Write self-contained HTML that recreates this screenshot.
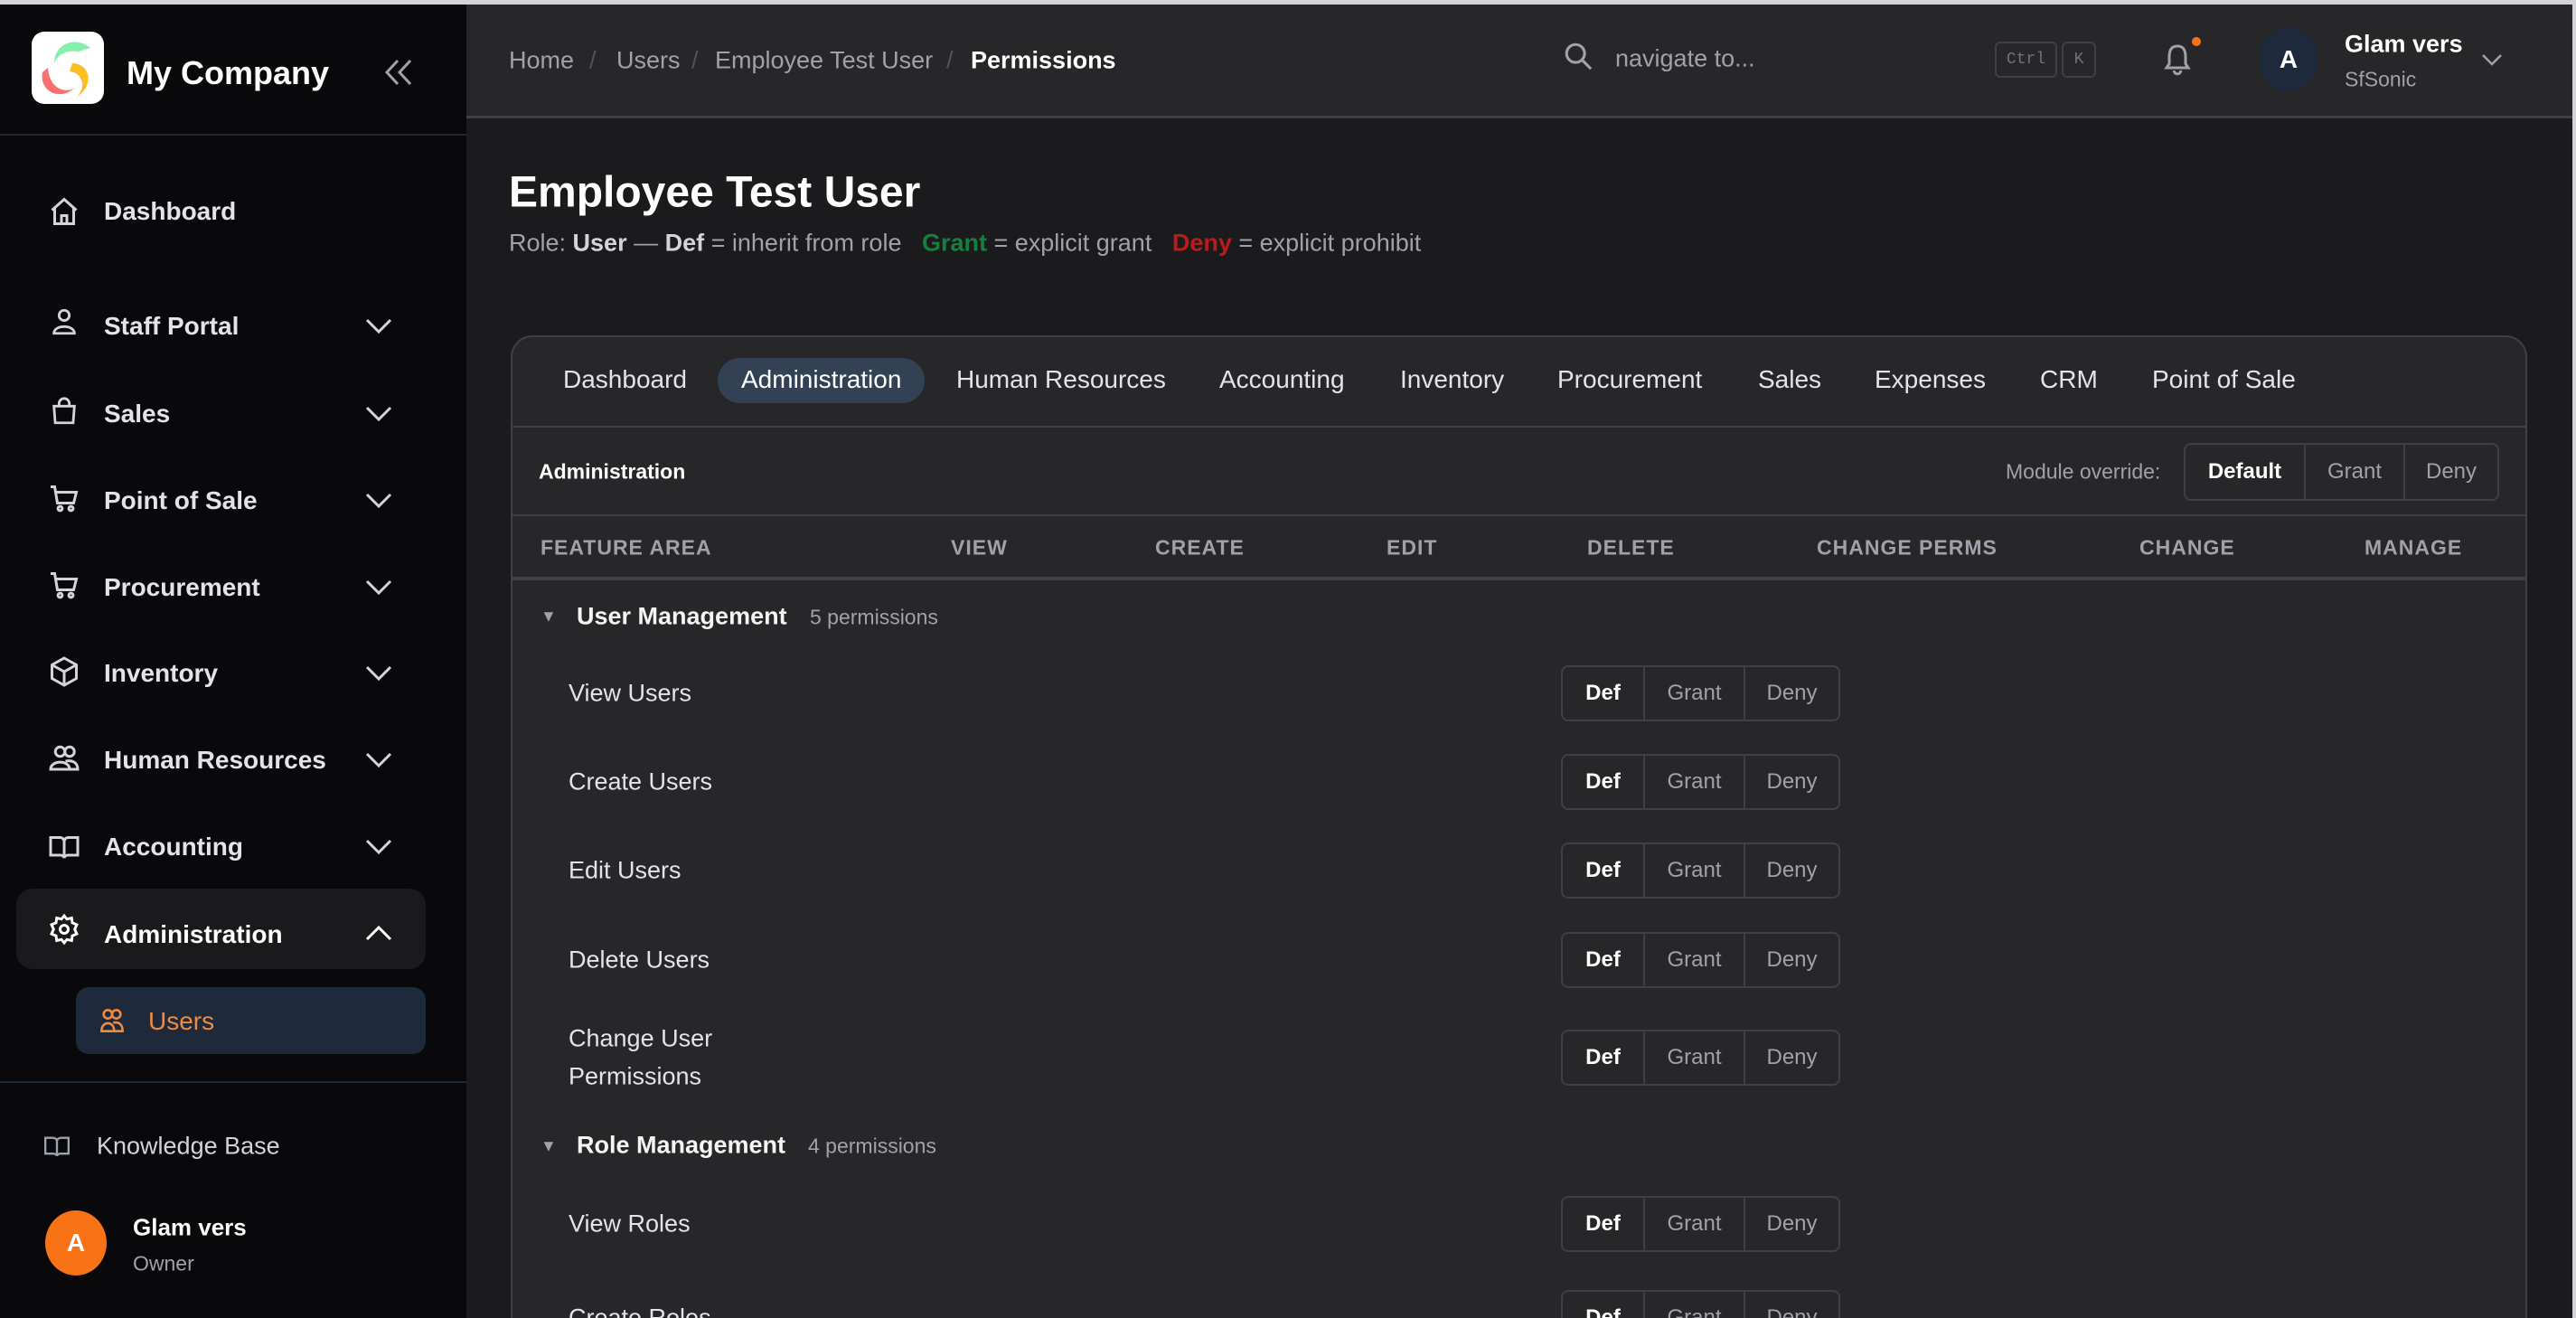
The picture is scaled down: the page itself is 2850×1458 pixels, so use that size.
<!DOCTYPE html>
<html><head><meta charset="utf-8"><style>
*{box-sizing:border-box;margin:0;padding:0}
html,body{width:2850px;height:1458px;overflow:hidden}
body{background:#1b1b1d;font-family:"Liberation Sans",sans-serif;color:#e4e4e7}
#root{position:relative;width:2850px;height:1458px;overflow:hidden}
.a{position:absolute;white-space:nowrap}
#side{position:absolute;left:0;top:0;width:516px;height:1458px;background:#09090b;border-top:5px solid #d4d4d8}
#hdr{position:absolute;left:516px;top:0;width:2334px;height:131px;background:#27272a;border-top:5px solid #d4d4d8;border-bottom:3px solid #3f3f46}
.nav{font-size:28px;color:#e4e4e7;font-weight:bold;transform:translateY(-50%)}
.ic{position:absolute;transform:translate(-50%,-50%)}
.chev{position:absolute;left:404px;transform:translateY(-50%)}
.bc{font-size:27px;color:#a1a1aa;transform:translateY(-50%)}
.card{position:absolute;left:565px;top:371px;width:2231px;height:1200px;background:#27272a;border:2px solid #3f3f46;border-radius:24px}
.tab{font-size:28px;color:#e4e4e7;transform:translateY(-50%)}
.th{font-size:23px;color:#a1a1aa;font-weight:bold;letter-spacing:1px;transform:translateY(-50%)}
.row{font-size:27px;color:#e4e4e7;transform:translateY(-50%)}
.grp{position:absolute;display:flex;border:2px solid #3f3f46;border-radius:8px;height:62px;transform:translateY(-50%)}
.grp div{display:flex;align-items:center;justify-content:center;font-size:24px;color:#a1a1aa;height:100%}
.grp div+div{border-left:2px solid #3f3f46}
.grp .on{color:#fff;font-weight:bold}
.gh{font-size:27px;font-weight:bold;color:#f4f4f5;transform:translateY(-50%)}
.gc{font-size:23px;color:#a1a1aa;transform:translateY(-50%)}
</style></head><body><div id="root">
<div id="side">
  <svg class="a" style="left:35px;top:30px" width="80" height="80" viewBox="0 0 80 80"><rect width="80" height="80" rx="14" fill="#fff"/>
  <path d="M65 18 C50 5 25 12 25 35 C28 26 38 20 52 22 Z" fill="#86efac"/>
  <path d="M12 45 C8 65 30 78 48 62 C40 68 20 66 18 40 Z" fill="#f87171"/>
  <path d="M45 35 C65 35 70 60 50 72 C62 60 55 45 42 44 Z" fill="#fbbf24"/></svg>
  <div class="a" style="left:140px;top:55px;font-size:36px;font-weight:bold;color:#fff">My Company</div>
  <svg class="a" style="left:425px;top:60px" width="32" height="30" viewBox="0 0 32 30" fill="none" stroke="#a1a1aa" stroke-width="3"><path d="M15 2 L3 15 L15 28 M29 2 L17 15 L29 28"/></svg>
  <div class="a" style="left:0;top:143px;width:516px;height:2px;background:#1e293b"></div>

  <svg class="ic" style="left:71px;top:229px" width="36" height="36" viewBox="0 0 24 24" fill="none" stroke="#d4d4d8" stroke-width="2"><path d="M3 11 L12 3 L21 11 M5 9 V21 H19 V9 M10 21 V15 H14 V21"/></svg>
  <div class="a nav" style="left:115px;top:229px">Dashboard</div>

  <svg class="ic" style="left:71px;top:351px" width="34" height="36" viewBox="0 0 24 24" fill="none" stroke="#d4d4d8" stroke-width="2"><circle cx="12" cy="7" r="4"/><path d="M4 21 C4 14 20 14 20 21 Z"/></svg>
  <div class="a nav" style="left:115px;top:356px">Staff Portal</div>
  <svg class="ic" style="left:71px;top:450px" width="34" height="36" viewBox="0 0 24 24" fill="none" stroke="#d4d4d8" stroke-width="2"><path d="M4 8 H20 L19 21 H5 Z M8 8 V6 A4 4 0 0 1 16 6 V8"/></svg>
  <div class="a nav" style="left:115px;top:453px">Sales</div>
  <svg class="ic" style="left:71px;top:547px" width="36" height="36" viewBox="0 0 24 24" fill="none" stroke="#d4d4d8" stroke-width="2"><path d="M2 3 H5 L7 15 H19 L21 7 H6"/><circle cx="9" cy="19" r="1.6"/><circle cx="17" cy="19" r="1.6"/></svg>
  <div class="a nav" style="left:115px;top:549px">Point of Sale</div>
  <svg class="ic" style="left:71px;top:643px" width="36" height="36" viewBox="0 0 24 24" fill="none" stroke="#d4d4d8" stroke-width="2"><path d="M2 3 H5 L7 15 H19 L21 7 H6"/><circle cx="9" cy="19" r="1.6"/><circle cx="17" cy="19" r="1.6"/></svg>
  <div class="a nav" style="left:115px;top:645px">Procurement</div>
  <svg class="ic" style="left:71px;top:738px" width="36" height="36" viewBox="0 0 24 24" fill="none" stroke="#d4d4d8" stroke-width="2"><path d="M12 2 L21 7 V17 L12 22 L3 17 V7 Z M3 7 L12 12 L21 7 M12 12 V22"/></svg>
  <div class="a nav" style="left:115px;top:740px">Inventory</div>
  <svg class="ic" style="left:71px;top:834px" width="38" height="36" viewBox="0 0 24 24" fill="none" stroke="#d4d4d8" stroke-width="2"><circle cx="9" cy="7" r="3.5"/><circle cx="16" cy="7" r="3.5"/><path d="M2 20 C2 13 16 13 16 20 Z M13 14 C18 13 22 15 22 20 H16"/></svg>
  <div class="a nav" style="left:115px;top:836px">Human Resources</div>
  <svg class="ic" style="left:71px;top:932px" width="38" height="36" viewBox="0 0 24 24" fill="none" stroke="#d4d4d8" stroke-width="2"><path d="M2 5 H9 A3 3 0 0 1 12 8 V20 A3 3 0 0 0 9 18 H2 Z M22 5 H15 A3 3 0 0 0 12 8 V20 A3 3 0 0 1 15 18 H22 Z"/></svg>
  <div class="a nav" style="left:115px;top:932px">Accounting</div>

  <svg class="chev" style="top:356px" width="30" height="18" viewBox="0 0 30 18" fill="none" stroke="#d4d4d8" stroke-width="3"><path d="M2 2 L15 15 L28 2"/></svg>
  <svg class="chev" style="top:453px" width="30" height="18" viewBox="0 0 30 18" fill="none" stroke="#d4d4d8" stroke-width="3"><path d="M2 2 L15 15 L28 2"/></svg>
  <svg class="chev" style="top:549px" width="30" height="18" viewBox="0 0 30 18" fill="none" stroke="#d4d4d8" stroke-width="3"><path d="M2 2 L15 15 L28 2"/></svg>
  <svg class="chev" style="top:645px" width="30" height="18" viewBox="0 0 30 18" fill="none" stroke="#d4d4d8" stroke-width="3"><path d="M2 2 L15 15 L28 2"/></svg>
  <svg class="chev" style="top:740px" width="30" height="18" viewBox="0 0 30 18" fill="none" stroke="#d4d4d8" stroke-width="3"><path d="M2 2 L15 15 L28 2"/></svg>
  <svg class="chev" style="top:836px" width="30" height="18" viewBox="0 0 30 18" fill="none" stroke="#d4d4d8" stroke-width="3"><path d="M2 2 L15 15 L28 2"/></svg>
  <svg class="chev" style="top:932px" width="30" height="18" viewBox="0 0 30 18" fill="none" stroke="#d4d4d8" stroke-width="3"><path d="M2 2 L15 15 L28 2"/></svg>

  <div class="a" style="left:18px;top:978px;width:453px;height:89px;background:#1a1a1c;border-radius:18px"></div>
  <svg class="ic" style="left:71px;top:1023px" width="36" height="36" viewBox="0 0 24 24" fill="none" stroke="#fff" stroke-width="2"><circle cx="12" cy="12" r="3"/><path d="M12 2 L14 4.5 L17.5 3.7 L18 7.2 L21.3 8.6 L19.8 12 L21.3 15.4 L18 16.8 L17.5 20.3 L14 19.5 L12 22 L10 19.5 L6.5 20.3 L6 16.8 L2.7 15.4 L4.2 12 L2.7 8.6 L6 7.2 L6.5 3.7 L10 4.5 Z"/></svg>
  <div class="a nav" style="left:115px;top:1029px;color:#fff">Administration</div>
  <svg class="chev" style="top:1027px" width="30" height="18" viewBox="0 0 30 18" fill="none" stroke="#fff" stroke-width="3"><path d="M2 16 L15 3 L28 16"/></svg>

  <div class="a" style="left:84px;top:1087px;width:387px;height:74px;background:#1e293b;border-radius:14px"></div>
  <svg class="ic" style="left:124px;top:1124px" width="28" height="28" viewBox="0 0 24 24" fill="none" stroke="#f08a3c" stroke-width="2.2"><circle cx="8" cy="6" r="4"/><circle cx="16" cy="6" r="4"/><path d="M2 22 C2 12 14 12 14 22 Z M14 22 H22 C22 15 18 13 13 14"/></svg>
  <div class="a" style="left:164px;top:1125px;font-size:28px;color:#f08a3c;transform:translateY(-50%)">Users</div>

  <div class="a" style="left:0;top:1191px;width:516px;height:2px;background:#1e293b"></div>
  <svg class="ic" style="left:63px;top:1263px" width="28" height="24" viewBox="0 0 24 20" fill="none" stroke="#9ca3af" stroke-width="2"><path d="M1 2 H8 A4 3 0 0 1 12 5 V19 A4 3 0 0 0 8 17 H1 Z M23 2 H16 A4 3 0 0 0 12 5 V19 A4 3 0 0 1 16 17 H23 Z"/></svg>
  <div class="a" style="left:107px;top:1263px;font-size:27px;color:#d4d4d8;transform:translateY(-50%)">Knowledge Base</div>
  <div class="a" style="left:50px;top:1334px;width:68px;height:72px;border-radius:50%;background:#f97316;color:#fff;font-weight:bold;font-size:28px;display:flex;align-items:center;justify-content:center">A</div>
  <div class="a" style="left:147px;top:1353px;font-size:26px;font-weight:bold;color:#fff;transform:translateY(-50%)">Glam vers</div>
  <div class="a" style="left:147px;top:1393px;font-size:23px;color:#a1a1aa;transform:translateY(-50%)">Owner</div>
</div>

<div id="hdr"></div>
<div class="a bc" style="left:563px;top:67px">Home</div>
<div class="a bc" style="left:652px;top:67px;color:#52525b">/</div>
<div class="a bc" style="left:682px;top:67px">Users</div>
<div class="a bc" style="left:765px;top:67px;color:#52525b">/</div>
<div class="a bc" style="left:791px;top:67px">Employee Test User</div>
<div class="a bc" style="left:1047px;top:67px;color:#52525b">/</div>
<div class="a bc" style="left:1074px;top:67px;color:#fff;font-weight:bold">Permissions</div>

<svg class="ic" style="left:1746px;top:62px" width="34" height="34" viewBox="0 0 24 24" fill="none" stroke="#a1a1aa" stroke-width="2.2"><circle cx="10" cy="10" r="7"/><path d="M15 15 L22 22"/></svg>
<div class="a" style="left:1787px;top:65px;font-size:27px;color:#a1a1aa;transform:translateY(-50%)">navigate to...</div>
<div class="a" style="left:2207px;top:46px;width:69px;height:40px;border:2px solid #3f3f46;border-radius:6px;font-family:'Liberation Mono',monospace;font-size:18px;color:#71717a;display:flex;align-items:center;justify-content:center">Ctrl</div>
<div class="a" style="left:2281px;top:46px;width:38px;height:40px;border:2px solid #3f3f46;border-radius:6px;font-family:'Liberation Mono',monospace;font-size:18px;color:#71717a;display:flex;align-items:center;justify-content:center">K</div>
<svg class="ic" style="left:2409px;top:66px" width="36" height="40" viewBox="0 0 24 26" fill="none" stroke="#a1a1aa" stroke-width="2"><path d="M12 3 C7 3 6 7 6 11 V16 L4 19 H20 L18 16 V11 C18 7 17 3 12 3 Z M9.5 21 A2.5 2.5 0 0 0 14.5 21"/></svg>
<div class="a" style="left:2425px;top:41px;width:10px;height:10px;border-radius:50%;background:#f97316"></div>
<div class="a" style="left:2499px;top:30px;width:66px;height:72px;border-radius:50%;background:#1e293b;color:#fff;font-size:28px;font-weight:bold;display:flex;align-items:center;justify-content:center">A</div>
<div class="a" style="left:2594px;top:49px;font-size:27px;font-weight:bold;color:#fff;transform:translateY(-50%)">Glam vers</div>
<div class="a" style="left:2594px;top:88px;font-size:23px;color:#a1a1aa;transform:translateY(-50%)">SfSonic</div>
<svg class="ic" style="left:2757px;top:66px" width="24" height="14" viewBox="0 0 24 14" fill="none" stroke="#a1a1aa" stroke-width="2.5"><path d="M2 2 L12 12 L22 2"/></svg>

<div class="a" style="left:563px;top:213px;font-size:48px;font-weight:bold;color:#fff;transform:translateY(-50%)">Employee Test User</div>
<div class="a" style="left:563px;top:269px;font-size:27px;color:#a1a1aa;transform:translateY(-50%)">Role: <b style="color:#d4d4d8">User</b> — <b style="color:#d4d4d8">Def</b> = inherit from role &nbsp; <b style="color:#15803d">Grant</b> = explicit grant &nbsp; <b style="color:#b91c1c">Deny</b> = explicit prohibit</div>

<div class="card"></div>
<div class="a" style="left:794px;top:396px;width:229px;height:50px;border-radius:25px;background:#334155"></div>
<div class="a tab" style="left:623px;top:420px">Dashboard</div>
<div class="a tab" style="left:820px;top:420px;color:#fff">Administration</div>
<div class="a tab" style="left:1058px;top:420px">Human Resources</div>
<div class="a tab" style="left:1349px;top:420px">Accounting</div>
<div class="a tab" style="left:1549px;top:420px">Inventory</div>
<div class="a tab" style="left:1723px;top:420px">Procurement</div>
<div class="a tab" style="left:1945px;top:420px">Sales</div>
<div class="a tab" style="left:2074px;top:420px">Expenses</div>
<div class="a tab" style="left:2257px;top:420px">CRM</div>
<div class="a tab" style="left:2381px;top:420px">Point of Sale</div>
<div class="a" style="left:567px;top:471px;width:2227px;height:2px;background:#3f3f46"></div>

<div class="a" style="left:596px;top:522px;font-size:23px;font-weight:bold;color:#fff;transform:translateY(-50%)">Administration</div>
<div class="a" style="left:2219px;top:522px;font-size:23px;color:#a1a1aa;transform:translateY(-50%)">Module override:</div>
<div class="grp" style="left:2416px;top:522px;height:64px">
  <div class="on" style="width:131px">Default</div><div style="width:110px">Grant</div><div style="width:104px">Deny</div>
</div>
<div class="a" style="left:567px;top:569px;width:2227px;height:2px;background:#3f3f46"></div>

<div class="a th" style="left:598px;top:606px">FEATURE AREA</div>
<div class="a th" style="left:1052px;top:606px">VIEW</div>
<div class="a th" style="left:1278px;top:606px">CREATE</div>
<div class="a th" style="left:1534px;top:606px">EDIT</div>
<div class="a th" style="left:1756px;top:606px">DELETE</div>
<div class="a th" style="left:2010px;top:606px">CHANGE PERMS</div>
<div class="a th" style="left:2367px;top:606px">CHANGE</div>
<div class="a th" style="left:2616px;top:606px">MANAGE</div>
<div class="a" style="left:567px;top:638px;width:2227px;height:4px;background:#3f3f46"></div>

<div class="a" style="left:598px;top:682px;font-size:18px;color:#a1a1aa;transform:translateY(-50%)">▼</div>
<div class="a gh" style="left:638px;top:682px">User Management</div>
<div class="a gc" style="left:896px;top:683px">5 permissions</div>

<div class="a row" style="left:629px;top:767px">View Users</div>
<div class="grp" style="left:1727px;top:767px"><div class="on" style="width:89px">Def</div><div style="width:111px">Grant</div><div style="width:105px">Deny</div></div>
<div class="a row" style="left:629px;top:865px">Create Users</div>
<div class="grp" style="left:1727px;top:865px"><div class="on" style="width:89px">Def</div><div style="width:111px">Grant</div><div style="width:105px">Deny</div></div>
<div class="a row" style="left:629px;top:963px">Edit Users</div>
<div class="grp" style="left:1727px;top:963px"><div class="on" style="width:89px">Def</div><div style="width:111px">Grant</div><div style="width:105px">Deny</div></div>
<div class="a row" style="left:629px;top:1062px">Delete Users</div>
<div class="grp" style="left:1727px;top:1062px"><div class="on" style="width:89px">Def</div><div style="width:111px">Grant</div><div style="width:105px">Deny</div></div>
<div class="a row" style="left:629px;top:1149px">Change User</div>
<div class="a row" style="left:629px;top:1191px">Permissions</div>
<div class="grp" style="left:1727px;top:1170px"><div class="on" style="width:89px">Def</div><div style="width:111px">Grant</div><div style="width:105px">Deny</div></div>

<div class="a" style="left:598px;top:1268px;font-size:18px;color:#a1a1aa;transform:translateY(-50%)">▼</div>
<div class="a gh" style="left:638px;top:1267px">Role Management</div>
<div class="a gc" style="left:894px;top:1268px">4 permissions</div>
<div class="a row" style="left:629px;top:1354px">View Roles</div>
<div class="grp" style="left:1727px;top:1354px"><div class="on" style="width:89px">Def</div><div style="width:111px">Grant</div><div style="width:105px">Deny</div></div>
<div class="a row" style="left:629px;top:1458px">Create Roles</div>
<div class="grp" style="left:1727px;top:1458px"><div class="on" style="width:89px">Def</div><div style="width:111px">Grant</div><div style="width:105px">Deny</div></div>
<div class="a" style="left:2846px;top:0;width:4px;height:1458px;background:#d4d4d8"></div>
</div></body></html>
